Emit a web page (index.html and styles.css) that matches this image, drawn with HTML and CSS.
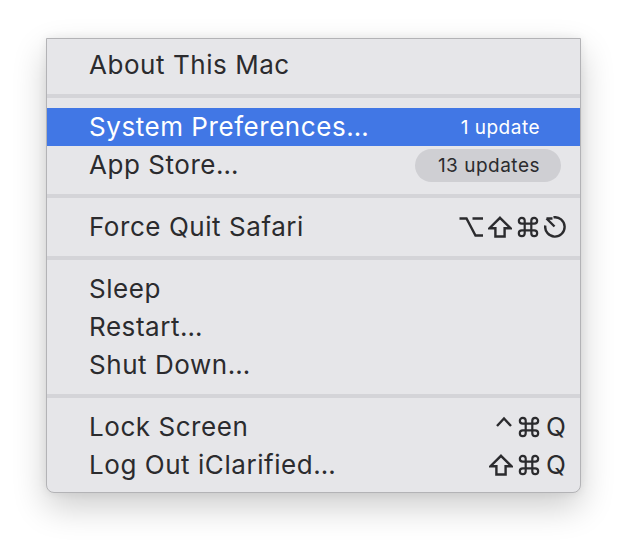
FILE: index.html
```html
<!DOCTYPE html>
<html>
<head>
<meta charset="utf-8">
<link rel="stylesheet" href="styles.css">
</head>
<body>
<div class="menu">
  <div class="item"><span class="label">About This Mac</span></div>
  <div class="sep"></div>
  <div class="item active"><span class="label">System Preferences…</span><span class="badge">1 update</span></div>
  <div class="item"><span class="label">App Store…</span><span class="badge pill">13 updates</span></div>
  <div class="sep"></div>
  <div class="item"><span class="label">Force Quit Safari</span>
    <span class="keys">
      <svg class="k opt" viewBox="0 0 24 22"><path d="M0.5 2.5H7.5L16.5 19.5H24M13.5 2.5H24"/></svg>
      <svg class="k shift" viewBox="0 0 24 22"><path d="M12 1.8L22.5 12.2H16.6V20.5H7.4V12.2H1.5Z"/></svg>
      <svg class="k cmd" viewBox="-1 -1 24 24"><path d="M4.2 7.4H17.8A3.2 3.2 0 1 0 14.6 4.2V17.8A3.2 3.2 0 1 0 17.8 14.6H4.2A3.2 3.2 0 1 0 7.4 17.8V4.2A3.2 3.2 0 1 0 4.2 7.4Z"/></svg>
      <svg class="k esc" viewBox="0 0 22 22"><path d="M9.5 1.3A9.7 9.7 0 1 1 1.3 9.5"/><path d="M2.5 2.5H8.5M2.5 2.5L10.5 10.5"/></svg>
    </span>
  </div>
  <div class="sep"></div>
  <div class="item"><span class="label">Sleep</span></div>
  <div class="item"><span class="label">Restart…</span></div>
  <div class="item"><span class="label">Shut Down…</span></div>
  <div class="sep"></div>
  <div class="item"><span class="label">Lock Screen</span>
    <span class="keys">
      <svg class="k caret" viewBox="0 0 18 22"><path d="M2 10L9 2.5L16 10"/></svg>
      <svg class="k cmd" viewBox="-1 -1 24 24"><path d="M4.2 7.4H17.8A3.2 3.2 0 1 0 14.6 4.2V17.8A3.2 3.2 0 1 0 17.8 14.6H4.2A3.2 3.2 0 1 0 7.4 17.8V4.2A3.2 3.2 0 1 0 4.2 7.4Z"/></svg>
      <span class="q">Q</span>
    </span>
  </div>
  <div class="item"><span class="label">Log Out iClarified…</span>
    <span class="keys">
      <svg class="k shift" viewBox="0 0 24 22"><path d="M12 1.8L22.5 12.2H16.6V20.5H7.4V12.2H1.5Z"/></svg>
      <svg class="k cmd" viewBox="-1 -1 24 24"><path d="M4.2 7.4H17.8A3.2 3.2 0 1 0 14.6 4.2V17.8A3.2 3.2 0 1 0 17.8 14.6H4.2A3.2 3.2 0 1 0 7.4 17.8V4.2A3.2 3.2 0 1 0 4.2 7.4Z"/></svg>
      <span class="q">Q</span>
    </span>
  </div>
</div>
</body>
</html>
```
FILE: styles.css
```css
html, body {
  margin: 0;
  padding: 0;
  background: #ffffff;
}
body {
  padding: 38px 0 0 46px;
  height: 546px;
  box-sizing: border-box;
  font-family: Inter, "Noto Sans", sans-serif;
}
.menu {
  box-sizing: border-box;
  width: 535px;
  height: 455px;
  background: #e6e6e9;
  border: 1px solid #b3b3b6;
  border-radius: 0 0 8px 8px;
  box-shadow: 0 14px 34px rgba(0, 0, 0, 0.2), 0 0 10px rgba(0, 0, 0, 0.07);
  padding-top: 7px;
  display: flex;
  flex-direction: column;
}
.item {
  height: 38px;
  display: flex;
  align-items: center;
  justify-content: space-between;
  padding: 0 14px 0 42px;
  color: #2b2b2e;
}
.label {
  font-size: 26px;
  letter-spacing: 0.55px;
  line-height: 38px;
}
.active {
  background: #4177e5;
  color: #ffffff;
}
.badge {
  font-size: 19px;
  letter-spacing: 0.5px;
  line-height: 33px;
  height: 33px;
  padding: 0 21px 0 23px;
  margin-right: 5px;
  border-radius: 17px;
}
.pill {
  background: #cfcfd3;
  color: #2b2b2e;
}
.sep {
  height: 4px;
  margin: 10px 0;
  background: #d4d4d8;
}
.keys {
  display: flex;
  align-items: center;
  gap: 5px;
}
.k {
  height: 22px;
  fill: none;
  stroke: #2b2b2e;
  stroke-width: 2.4;
  stroke-linejoin: miter;
}
.opt, .shift { width: 24px; }
.cmd { width: 22px; }
.esc { width: 22px; }
.caret { width: 18px; }
.q {
  font-size: 26px;
  line-height: 22px;
  color: #2b2b2e;
  margin-left: 1px;
}
```
